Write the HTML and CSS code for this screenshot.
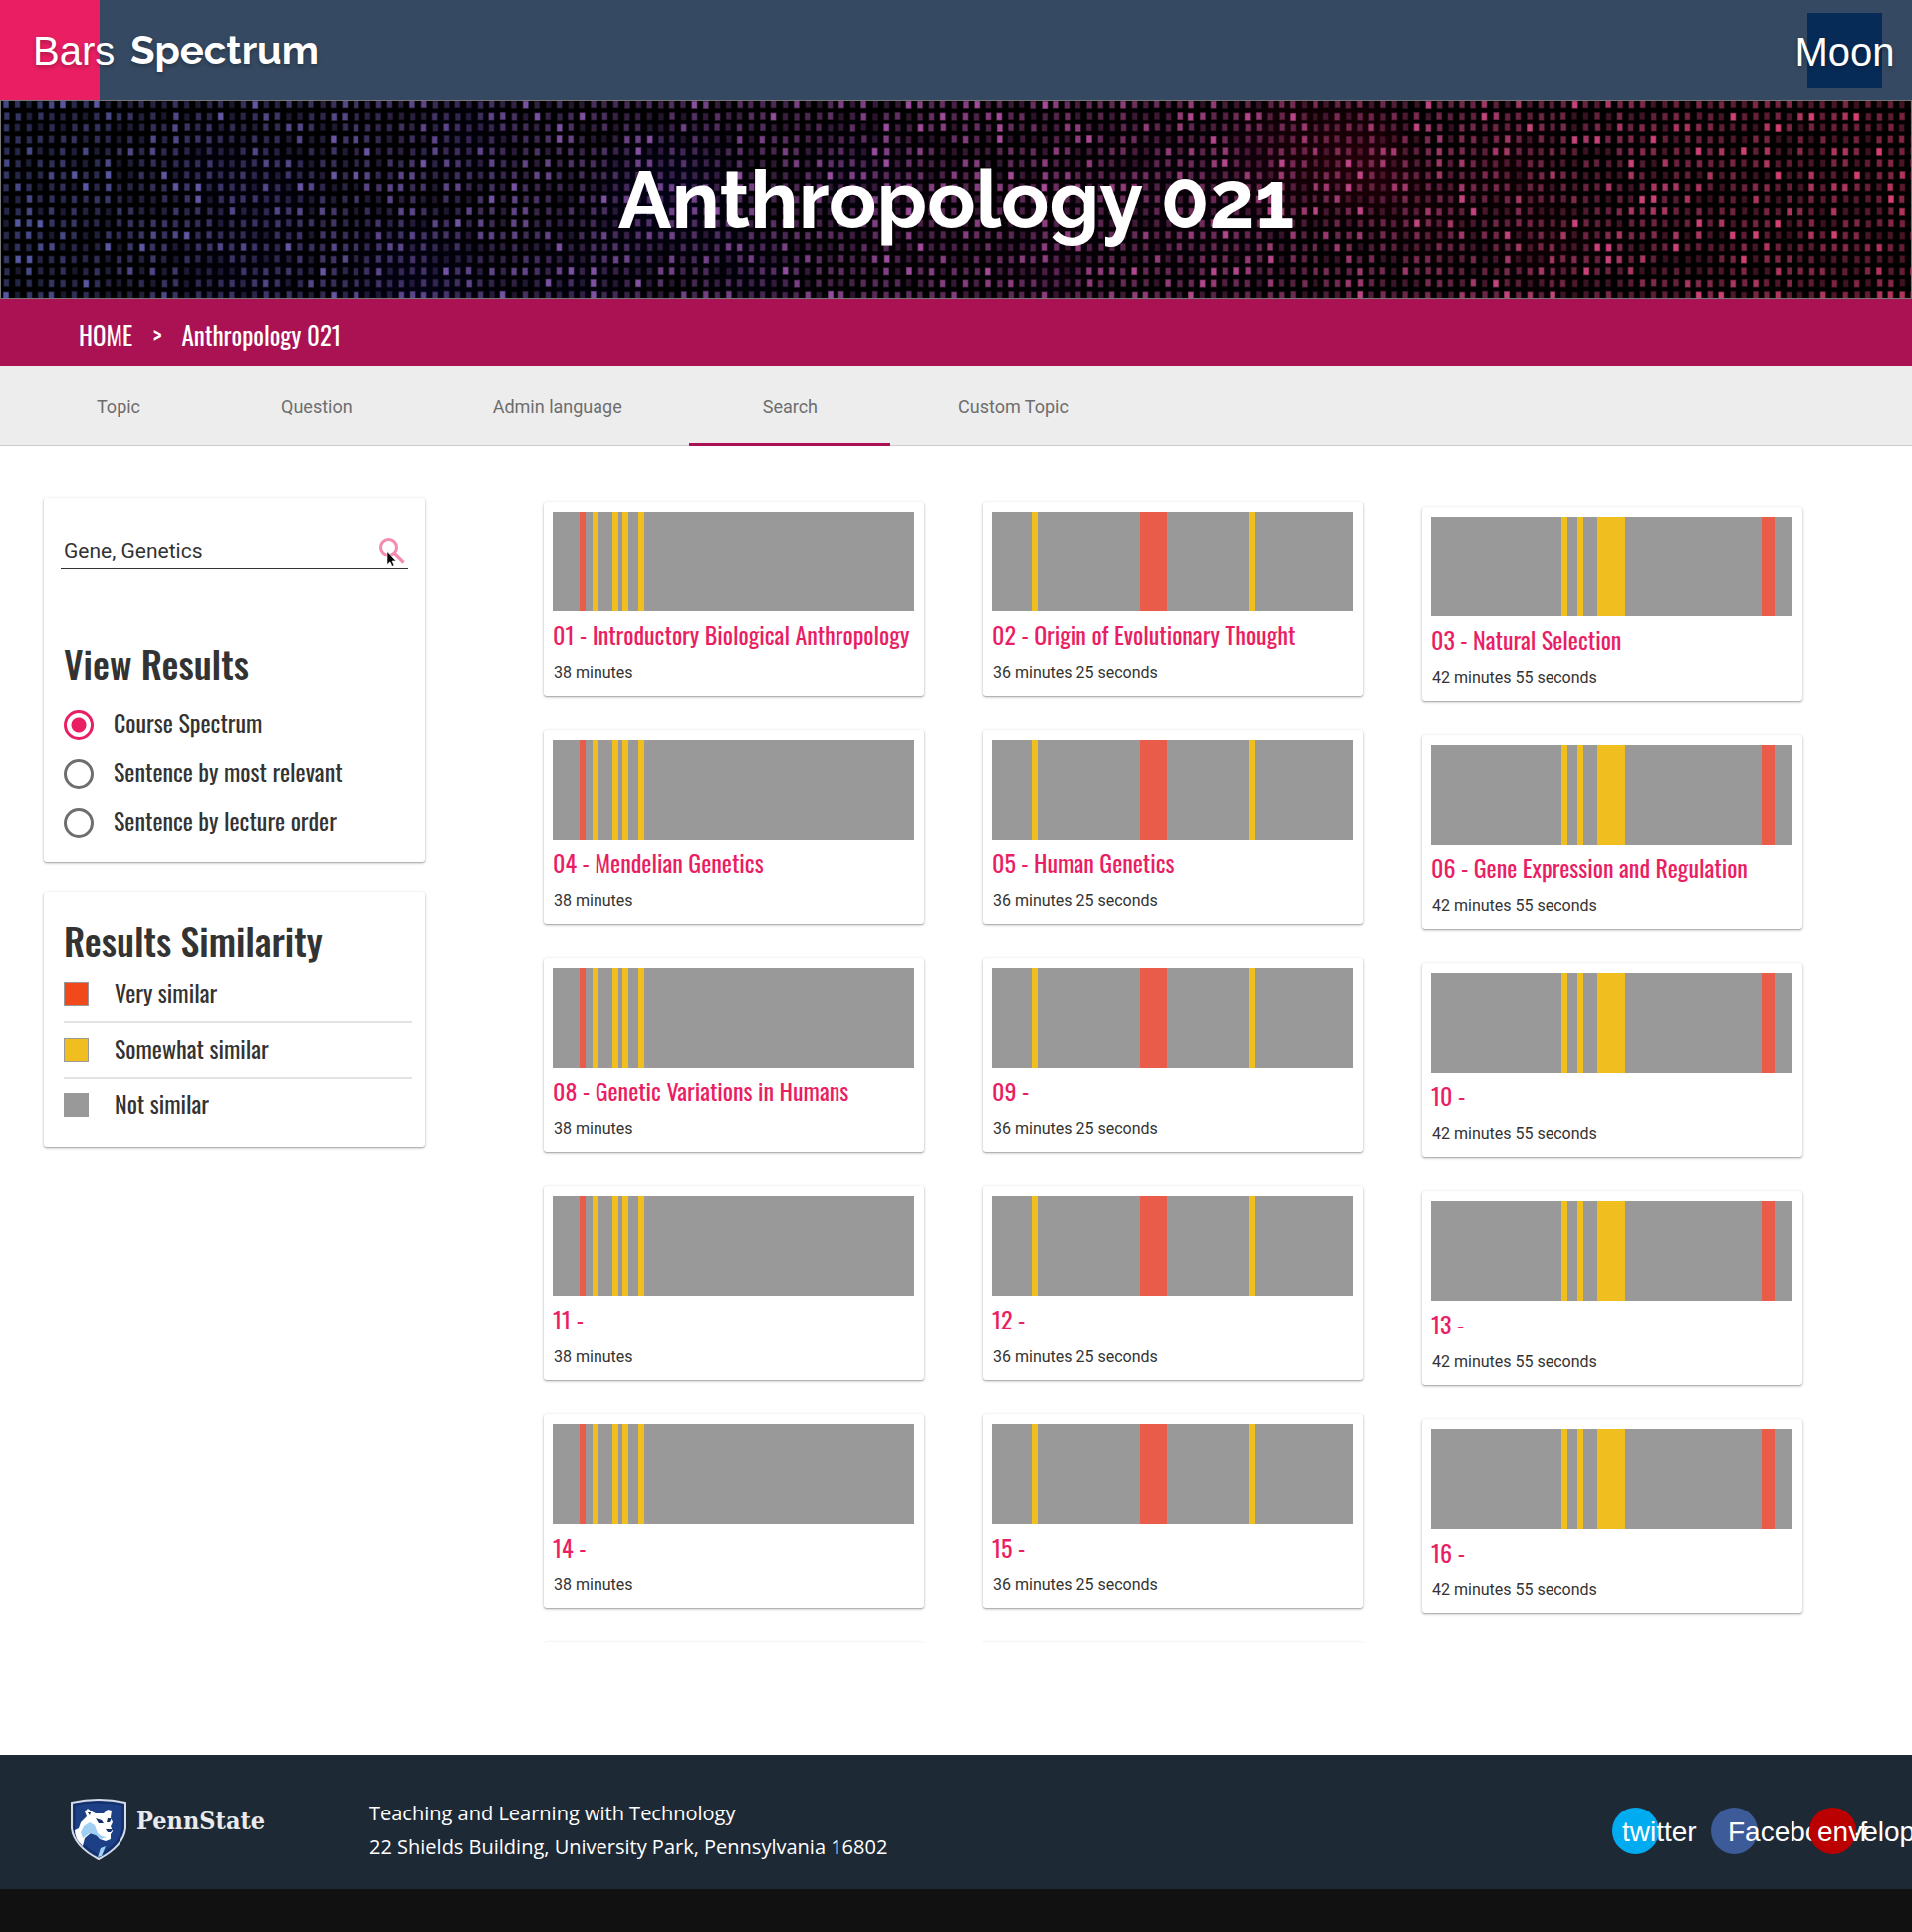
FILE: index.html
```html
<!DOCTYPE html>
<html lang="en">
<head>
<meta charset="utf-8">
<title>Anthropology 021</title>
<link rel="stylesheet" href="styles.css">
</head>
<body>
<header class="topbar">
  <a class="brand" href="#"><span class="brand-icon">Bars</span><span class="brand-name">Spectrum</span></a>
  <button class="theme" type="button">Moon</button>
</header>
<section class="hero">
  <canvas class="hero-lights" id="lights" width="1918" height="198"></canvas>
  <h1 class="hero-title">Anthropology 021</h1>
</section>
<nav class="crumbs" aria-label="Breadcrumb">
  <a href="#">HOME</a><span class="crumb-sep">&gt;</span><a href="#">Anthropology 021</a>
</nav>
<nav class="tabs" aria-label="Sections">
  <a class="tab" href="#">Topic</a>
  <a class="tab" href="#">Question</a>
  <a class="tab" href="#">Admin language</a>
  <a class="tab tab-active" href="#">Search</a>
  <a class="tab" href="#">Custom Topic</a>
</nav>
<main class="main">
  <aside class="side">
    <form class="card filter">
      <div class="search">
        <input class="search-input" type="text" value="Gene, Genetics" aria-label="Search terms">
        <button class="search-btn" type="button" aria-label="Search">
          <svg width="26" height="30" viewBox="0 0 26 30">
            <circle cx="9.500" cy="9.500" r="8" fill="none" stroke="#f48cae" stroke-width="3"/>
            <path d="M15.500 15.500 L24.500 24.500" stroke="#f48cae" stroke-width="3.200"/>
            <path d="M8 13.500 V26.500 L11 23.800 L13 28.300 L15 27.400 L13 23 H16.800 Z" fill="#000" stroke="#fff" stroke-width=".6"/>
          </svg>
        </button>
      </div>
      <h2 class="card-title">View Results</h2>
      <label class="option"><input type="radio" name="view" checked><span class="label">Course Spectrum</span></label>
      <label class="option"><input type="radio" name="view"><span class="label">Sentence by most relevant</span></label>
      <label class="option"><input type="radio" name="view"><span class="label">Sentence by lecture order</span></label>
    </form>
    <section class="card legend">
      <h2 class="card-title">Results Similarity</h2>
      <ul class="legend-list">
        <li><span class="swatch swatch-very"></span><span class="label">Very similar</span></li>
        <li><span class="swatch swatch-some"></span><span class="label">Somewhat similar</span></li>
        <li><span class="swatch swatch-not"></span><span class="label">Not similar</span></li>
      </ul>
    </section>
  </aside>
  <section class="results">
    <article class="card lecture"><div class="bar bar-a"></div><a class="lecture-title" href="#">01 - Introductory Biological Anthropology</a><p class="time">38 minutes</p></article>
    <article class="card lecture"><div class="bar bar-b"></div><a class="lecture-title" href="#">02 - Origin of Evolutionary Thought</a><p class="time">36 minutes 25 seconds</p></article>
    <article class="card lecture"><div class="bar bar-c"></div><a class="lecture-title" href="#">03 - Natural Selection</a><p class="time">42 minutes 55 seconds</p></article>
    <article class="card lecture"><div class="bar bar-a"></div><a class="lecture-title" href="#">04 - Mendelian Genetics</a><p class="time">38 minutes</p></article>
    <article class="card lecture"><div class="bar bar-b"></div><a class="lecture-title" href="#">05 - Human Genetics</a><p class="time">36 minutes 25 seconds</p></article>
    <article class="card lecture"><div class="bar bar-c"></div><a class="lecture-title" href="#">06 - Gene Expression and Regulation</a><p class="time">42 minutes 55 seconds</p></article>
    <article class="card lecture"><div class="bar bar-a"></div><a class="lecture-title" href="#">08 - Genetic Variations in Humans</a><p class="time">38 minutes</p></article>
    <article class="card lecture"><div class="bar bar-b"></div><a class="lecture-title" href="#">09 -</a><p class="time">36 minutes 25 seconds</p></article>
    <article class="card lecture"><div class="bar bar-c"></div><a class="lecture-title" href="#">10 -</a><p class="time">42 minutes 55 seconds</p></article>
    <article class="card lecture"><div class="bar bar-a"></div><a class="lecture-title" href="#">11 -</a><p class="time">38 minutes</p></article>
    <article class="card lecture"><div class="bar bar-b"></div><a class="lecture-title" href="#">12 -</a><p class="time">36 minutes 25 seconds</p></article>
    <article class="card lecture"><div class="bar bar-c"></div><a class="lecture-title" href="#">13 -</a><p class="time">42 minutes 55 seconds</p></article>
    <article class="card lecture"><div class="bar bar-a"></div><a class="lecture-title" href="#">14 -</a><p class="time">38 minutes</p></article>
    <article class="card lecture"><div class="bar bar-b"></div><a class="lecture-title" href="#">15 -</a><p class="time">36 minutes 25 seconds</p></article>
    <article class="card lecture"><div class="bar bar-c"></div><a class="lecture-title" href="#">16 -</a><p class="time">42 minutes 55 seconds</p></article>
    <div class="card peek"></div>
    <div class="card peek"></div>
  </section>
</main>
<footer class="footer">
  <a class="school" href="#">
    <svg class="shield" width="56" height="62" viewBox="0 0 56 62" aria-hidden="true">
      <path d="M1 4 Q28 -2 55 4 V30 Q53 48 28 61 Q3 48 1 30 Z" fill="#1c3f86" stroke="#d5dce8" stroke-width="2"/>
      <path d="M3.500 6 Q28 1 52.500 6 V30 Q50 46 28 58 Q6 46 3.500 30 Z" fill="none" stroke="#14306b" stroke-width="2"/>
      <path d="M16 18 L14 13 L17 10 L21 13 L25 15 L33 15 L37 11 L41 12 L40 19 L42 24 L40 28 L42 33 L40 36 L40 41 L35 43 L29 41 L26 37 L20 35 L14 40 L12 48 Q4 41 4 32 L8 30 L10 24 Z" fill="#fff"/>
      <path d="M13 28 L19 24 L24 27 L27 35 L31 38 L36 39 L30 41 L25 37 L19 35 L12 40 L10 34 Z" fill="#9fd0f3"/>
      <path d="M25 20 L31 22 L33 25 L28 25 Z M37 20 L41 20 L39 24 L36 24 Z M35 31 L42 31 L40 34 L37 34 Z M17 14 L20 14 L19 17 Z" fill="#14306b"/>
      <path d="M30 50 L35 48 L31 58 L27 59 Z" fill="#9fd0f3"/>
    </svg>
    <span class="school-name">PennState</span>
  </a>
  <address class="address">Teaching and Learning with Technology<br>22 Shields Building, University Park, Pennsylvania 16802</address>
  <div class="social">
    <a class="dot dot-twitter" href="#">twitter</a>
    <a class="dot dot-facebook" href="#">Facebook-f</a>
    <a class="dot dot-mail" href="#">envelope</a>
  </div>
</footer>
<script src="lights.js"></script>
</body>
</html>
```
FILE: styles.css
```css
* { box-sizing: border-box; }
body {
  margin: 0;
  min-height: 100vh;
  background: #111;
  color: #333;
  font-family: Roboto, sans-serif;
  overflow-x: hidden;
}
h1, h2, p, ul { margin: 0; padding: 0; }
a { color: inherit; text-decoration: none; }
ul { list-style: none; }

.topbar {
  display: flex;
  justify-content: space-between;
  align-items: center;
  height: 100px;
  padding-right: 30px;
  background: #354962;
  color: #fff;
}
.brand { display: flex; align-items: center; gap: 31px; text-shadow: 0 2px 4px rgba(0,0,0,.3); }
.brand-icon {
  width: 100px;
  height: 100px;
  padding-left: 33px;
  background: #ea1e63;
  font: 40px/102px "Liberation Sans", sans-serif;
}
.brand-name { font: 700 40px/102px Raleway, Lato, sans-serif; }
.theme {
  display: flex;
  align-items: center;
  justify-content: center;
  width: 75px;
  height: 75px;
  padding: 4px 0 0;
  border: 0;
  background: #072b57;
  color: #fff;
  font: 40px "Liberation Sans", sans-serif;
  text-shadow: 0 2px 4px rgba(0,0,0,.3);
}

.hero {
  display: grid;
  height: 200px;
  border: 1px solid #777;
  background: #000;
}
.hero > * { grid-area: 1 / 1; }
.hero-lights { width: 100%; height: 198px; }
.hero-title {
  z-index: 1;
  text-align: center;
  color: #fff;
  font: 700 80px/200px Raleway, Lato, sans-serif;
}

.crumbs {
  display: flex;
  align-items: center;
  gap: 20px;
  height: 68px;
  padding: 2px 79px 0;
  background: #ab1254;
  color: #fff;
  font: 25px Oswald, "Roboto Condensed", sans-serif;
}

.tabs {
  display: flex;
  height: 80px;
  padding-left: 26px;
  background: #ededed;
  border-bottom: 1px solid #ccc;
}
.tab {
  position: relative;
  padding: 0 70px 0 71px;
  color: #6e6e6e;
  font-size: 18px;
  line-height: 82px;
}
.tab-active::after {
  content: "";
  position: absolute;
  left: -3px;
  right: -3px;
  bottom: -1px;
  height: 3px;
  background: #ab1254;
}

.main {
  display: flex;
  align-items: flex-start;
  gap: 115px;
  padding: 52px 106px 112px 44px;
  background: #fff;
}
.card {
  background: #fff;
  border-radius: 3px;
  box-shadow: 0 1px 3px rgba(0,0,0,.3), 0 1px 1px rgba(0,0,0,.14);
}
.side { display: grid; gap: 30px; flex: 0 0 383px; }
.filter { height: 366px; padding: 35px 17px 0; }
.search {
  display: flex;
  align-items: center;
  height: 36px;
  border-bottom: 1px solid #333;
}
.search-input {
  flex: 1;
  min-width: 0;
  padding: 0 3px;
  border: 0;
  background: none;
  color: #333;
  font: 21px Roboto, sans-serif;
}
.search-btn { display: flex; padding: 4px 3px 0 0; border: 0; background: none; }
.card-title { font: 500 38px/56px Oswald, "Roboto Condensed", sans-serif; }
.filter .card-title { margin: 67px 0 9px 3px; }
.option {
  display: flex;
  align-items: center;
  gap: 20px;
  height: 49px;
  padding-left: 3px;
  font: 24px Oswald, "Roboto Condensed", sans-serif;
}
.option input {
  appearance: none;
  width: 30px;
  height: 30px;
  margin: 0;
  border: 3px solid #6e6e6e;
  border-radius: 50%;
}
.option input:checked {
  border-color: #ea1e63;
  background: radial-gradient(circle, #ea1e63 7px, transparent 8px);
}
.label { padding-bottom: 5px; }
.legend { height: 256px; padding: 20px 13px 0 20px; }
.legend .card-title { margin-bottom: -1px; }
.legend-list li {
  display: flex;
  align-items: center;
  gap: 26px;
  height: 56px;
  border-bottom: 2px solid #e2e2e2;
  font: 24px Oswald, "Roboto Condensed", sans-serif;
}
.legend-list li:last-child { border: 0; height: 54px; }
.swatch { width: 25px; height: 24px; border: 1px solid #999; }
.swatch-very { background: #f1491c; }
.swatch-some { background: #f0be1e; }
.swatch-not { background: #999; }

.results {
  flex: 1;
  display: grid;
  grid-template-columns: repeat(3, 1fr);
  grid-auto-rows: 195px;
  gap: 34px 59px;
  max-height: 1150px;
  padding: 4px 4px 0;
  overflow: hidden;
}
.lecture { padding: 10px 10px 0 9px; }
.lecture:nth-child(3n) { margin: 5px 0 -5px; }
.bar { height: 100px; background-color: #999; background-repeat: no-repeat; }
.bar-a {
  background-image: linear-gradient(90deg, transparent 27px, #e95c49 27px 33px, transparent 33px 40px, #f0be1e 40px 46px, transparent 46px 60px, #f0be1e 60px 66px, transparent 66px 70px, #f0be1e 70px 76px, transparent 76px 86px, #f0be1e 86px 92px, transparent 92px);
}
.bar-b {
  background-image: linear-gradient(90deg, transparent 40px, #f0be1e 40px 46px, transparent 46px 149px, #e95c49 149px 176px, transparent 176px 258px, #f0be1e 258px 264px, transparent 264px);
}
.bar-c {
  background-image: linear-gradient(90deg, transparent 131px, #f0be1e 131px 137px, transparent 137px 147px, #f0be1e 147px 153px, transparent 153px 167px, #f0be1e 167px 195px, transparent 195px 332px, #e95c49 332px 345px, transparent 345px);
}
.lecture-title {
  display: block;
  margin-bottom: 4px;
  color: #ea1e63;
  font: 24px/46px Oswald, "Roboto Condensed", sans-serif;
  white-space: nowrap;
}
.time { padding-left: 1px; font-size: 16px; line-height: 24px; }

.footer {
  display: flex;
  align-items: flex-start;
  height: 135px;
  padding: 42px 56px 0 71px;
  background: #1e2936;
  color: #fff;
  overflow: hidden;
}
.school { display: flex; flex: 0 0 300px; gap: 10px; padding-top: 2px; }
.school-name { font: 700 25px/46px "DejaVu Serif Condensed", "DejaVu Serif", serif; color: #e8eaed; }
.address { flex: 1; font: 20px/34px "Open Sans", "Noto Sans", sans-serif; }
.social { display: flex; gap: 52px; padding-top: 11px; }
.dot {
  flex: 0 0 47px;
  width: 47px;
  height: 47px;
  border-radius: 50%;
  font: 28px/50px "Liberation Sans", sans-serif;
  white-space: nowrap;
}
.dot-twitter { background: #00abf0; padding-left: 10px; }
.dot-facebook { background: #3d5a99; padding-left: 17px; }
.dot-mail { background: #ba0000; padding-left: 8px; position: relative; }
```
FILE: lights.js
```js
// Draws the wall of small coloured lights behind the page title.
const canvas = document.getElementById("lights");
const ctx = canvas.getContext("2d");
let seed = 21;
function random() {
  seed = (seed * 1664525 + 1013904223) % 4294967296;
  return seed / 4294967296;
}
const stops = [[0, 98, 104, 190], [0.25, 135, 98, 190], [0.5, 190, 88, 180], [0.75, 225, 80, 150], [1, 255, 75, 130]];
function colourAt(t) {
  let i = 0;
  while (i < stops.length - 2 && t > stops[i + 1][0]) i++;
  const a = stops[i], b = stops[i + 1];
  const k = (t - a[0]) / (b[0] - a[0]);
  return [1, 2, 3].map(c => Math.round(a[c] + (b[c] - a[c]) * k)).join(",");
}
for (let g = 0; g < 26; g++) {
  const x = random() * 1918, y = random() * 198, r = 60 + random() * 50;
  const glow = ctx.createRadialGradient(x, y, 0, x, y, r);
  const tint = x < 900 ? "10,5,60" : x < 1300 ? "40,0,45" : "75,0,20";
  glow.addColorStop(0, "rgba(" + tint + ",.18)");
  glow.addColorStop(1, "rgba(" + tint + ",0)");
  ctx.fillStyle = glow;
  ctx.fillRect(x - r, y - r, r * 2, r * 2);
}
for (let row = 0; row < 17; row++) {
  for (let col = 0; col < 170; col++) {
    const x = 2 + col * 11.33 + random();
    const y = row * 11.98 - 1 + random();
    const v = random();
    const light = v > 0.95 ? 1 : v > 0.82 ? 0.75 : 0.2 + v * 0.42;
    ctx.fillStyle = "rgba(" + colourAt(x / 1918) + "," + light / 2 + ")";
    ctx.fillRect(x, y, 6, 8);
    ctx.fillStyle = "rgba(" + colourAt(x / 1918) + "," + light * 0.7 + ")";
    ctx.fillRect(x + 0.7, y + 0.7, 4.6, 6.6);
  }
}
```
